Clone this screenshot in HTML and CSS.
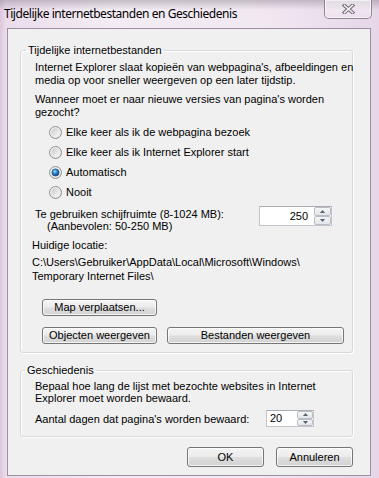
FILE: index.html
```html
<!DOCTYPE html>
<html lang="nl">
<head>
<meta charset="utf-8">
<title>Tijdelijke internetbestanden en Geschiedenis</title>
<link rel="stylesheet" href="styles.css">
</head>
<body>
<div class="window">
  <div class="titlebar">
    <span class="title">Tijdelijke internetbestanden en Geschiedenis</span>
    <button class="close" aria-label="Sluiten">
      <svg width="13" height="10" viewBox="0 0 13 10">
        <path d="M2.5 1.5 L10.5 8.5 M10.5 1.5 L2.5 8.5" stroke="#6f6a72" stroke-width="3.6" stroke-linecap="square" fill="none"/>
        <path d="M2.5 1.5 L10.5 8.5 M10.5 1.5 L2.5 8.5" stroke="#f4f2f5" stroke-width="1.6" stroke-linecap="square" fill="none"/>
      </svg>
    </button>
  </div>
  <div class="client">
    <fieldset class="group g1">
      <legend>Tijdelijke internetbestanden</legend>
      <p class="para">Internet Explorer slaat kopieën van webpagina's, afbeeldingen en<br>media op voor sneller weergeven op een later tijdstip.</p>
      <p class="para q">Wanneer moet er naar nieuwe versies van pagina's worden<br>gezocht?</p>
      <div class="radios">
        <label class="radio">
          <svg class="rb" width="13" height="13" viewBox="0 0 13 13">
            <defs>
              <linearGradient id="rIn" x1="0" y1="0" x2="1" y2="1">
                <stop offset="0" stop-color="#c9c9c9"/>
                <stop offset="1" stop-color="#fbfbfb"/>
              </linearGradient>
              <linearGradient id="rRing" x1="0" y1="0" x2="1" y2="1">
                <stop offset="0" stop-color="#f6f6f6"/>
                <stop offset="1" stop-color="#e2e2e2"/>
              </linearGradient>
              <radialGradient id="rDot" cx="0.4" cy="0.35" r="0.7">
                <stop offset="0" stop-color="#9bdcff"/>
                <stop offset="0.45" stop-color="#2b86cf"/>
                <stop offset="1" stop-color="#0b355f"/>
              </radialGradient>
            </defs>
            <circle cx="6.5" cy="6.5" r="6" fill="url(#rRing)" stroke="#8e8f8f"/>
            <circle cx="6.5" cy="6.5" r="4.2" fill="url(#rIn)"/>
          </svg>
          <span>Elke keer als ik de webpagina bezoek</span>
        </label>
        <label class="radio">
          <svg class="rb" width="13" height="13" viewBox="0 0 13 13">
            <circle cx="6.5" cy="6.5" r="6" fill="url(#rRing)" stroke="#8e8f8f"/>
            <circle cx="6.5" cy="6.5" r="4.2" fill="url(#rIn)"/>
          </svg>
          <span>Elke keer als ik Internet Explorer start</span>
        </label>
        <label class="radio">
          <svg class="rb" width="13" height="13" viewBox="0 0 13 13">
            <circle cx="6.5" cy="6.5" r="6" fill="url(#rRing)" stroke="#8e8f8f"/>
            <circle cx="6.5" cy="6.5" r="4.2" fill="url(#rIn)"/>
            <circle cx="6.5" cy="6.5" r="3.6" fill="url(#rDot)" stroke="#1a4a78" stroke-width="0.6"/>
          </svg>
          <span>Automatisch</span>
        </label>
        <label class="radio">
          <svg class="rb" width="13" height="13" viewBox="0 0 13 13">
            <circle cx="6.5" cy="6.5" r="6" fill="url(#rRing)" stroke="#8e8f8f"/>
            <circle cx="6.5" cy="6.5" r="4.2" fill="url(#rIn)"/>
          </svg>
          <span>Nooit</span>
        </label>
      </div>
      <div class="disk">
        <div class="disk-label">
          <div>Te gebruiken schijfruimte (8-1024 MB):</div>
          <div class="indent">(Aanbevolen: 50-250 MB)</div>
        </div>
        <div class="spin spin-disk">
          <span class="val">250</span>
          <span class="arrows">
            <span class="arr"><svg width="5" height="3" viewBox="0 0 5 3"><path d="M0 3 L2.5 0 L5 3 Z" fill="#56606b"/></svg></span>
            <span class="arr"><svg width="5" height="3" viewBox="0 0 5 3"><path d="M0 0 L2.5 3 L5 0 Z" fill="#56606b"/></svg></span>
          </span>
        </div>
      </div>
      <div class="loc">Huidige locatie:</div>
      <div class="path">C:\Users\Gebruiker\AppData\Local\Microsoft\Windows\<br>Temporary Internet Files\</div>
      <div class="btnrow first">
        <button class="btn w-map">Map verplaatsen...</button>
      </div>
      <div class="btnrow second">
        <button class="btn w-map">Objecten weergeven</button>
        <button class="btn w-best">Bestanden weergeven</button>
      </div>
    </fieldset>
    <fieldset class="group g2">
      <legend>Geschiedenis</legend>
      <p class="para hist">Bepaal hoe lang de lijst met bezochte websites in Internet<br>Explorer moet worden bewaard.</p>
      <div class="days">
        <span>Aantal dagen dat pagina's worden bewaard:</span>
        <div class="spin spin-days">
          <span class="val left">20</span>
          <span class="arrows">
            <span class="arr"><svg width="5" height="3" viewBox="0 0 5 3"><path d="M0 3 L2.5 0 L5 3 Z" fill="#56606b"/></svg></span>
            <span class="arr"><svg width="5" height="3" viewBox="0 0 5 3"><path d="M0 0 L2.5 3 L5 0 Z" fill="#56606b"/></svg></span>
          </span>
        </div>
      </div>
    </fieldset>
    <div class="dlg-buttons">
      <button class="btn w-ok">OK</button>
      <button class="btn w-ok">Annuleren</button>
    </div>
  </div>
</div>
</body>
</html>
```
FILE: styles.css
```css
html, body {
  margin: 0;
  padding: 0;
}
body {
  width: 379px;
  height: 478px;
  overflow: hidden;
  font-family: "Liberation Sans", Arial, sans-serif;
  font-size: 11px;
  color: #000;
}
.window {
  height: 478px;
  display: flex;
  flex-direction: column;
  background:
    linear-gradient(to bottom, rgba(110, 100, 112, 0.35) 0px, rgba(255, 255, 255, 0) 10px),
    linear-gradient(to right, #dcc6dd 0px, #ebdcec 6px, #f3ecf4 30%, #f1e8f2 70%, #e6d6e8 100%);
}
.titlebar {
  flex: none;
  height: 28px;
  display: flex;
  align-items: flex-start;
}
.title {
  font-family: "Noto Sans", "Open Sans", sans-serif;
  font-size: 12px;
  line-height: 16px;
  letter-spacing: -0.45px;
  padding: 6px 0 0 4px;
  white-space: nowrap;
  color: #000;
}
.close {
  margin-left: auto;
  margin-right: 7px;
  width: 48px;
  height: 19px;
  box-sizing: border-box;
  padding: 0;
  border: 1px solid #8f8593;
  border-top: none;
  border-radius: 0 0 5px 5px;
  background: linear-gradient(to bottom, rgba(255, 255, 255, 0.55), rgba(240, 232, 242, 0.35));
  box-shadow: inset 0 0 0 1px rgba(255, 255, 255, 0.55);
  display: flex;
  align-items: center;
  justify-content: center;
}
.client {
  flex: none;
  margin: 0 8px 0 7px;
  height: 448px;
  box-sizing: border-box;
  border: 1px solid #9c8f9f;
  background: #f0f0f0;
  display: flex;
  flex-direction: column;
}
.group {
  margin: 0 17px 0 12px;
  border: 1px solid #d5d9dd;
  border-radius: 3px;
  box-shadow: inset 1px 1px 0 #fff, 1px 1px 0 #fff;
  min-width: 0;
  white-space: nowrap;
}
.group legend {
  line-height: 13px;
  padding: 0 2px;
}
.g1 {
  margin-top: 15px;
  padding: 4px 4px 8px 14px;
}
.g1 legend {
  margin-left: -9px;
}
.g2 {
  margin-top: 11px;
  padding: 3px 4px 9px 14px;
}
.g2 legend {
  margin-left: -10px;
}
.para {
  margin: 0;
  line-height: 13px;
}
.para.q {
  margin-top: 6px;
}
.para.hist {
  line-height: 12px;
}
.radios {
  margin-top: 3px;
}
.radio {
  height: 20px;
  display: flex;
  align-items: center;
  gap: 4px;
  padding-left: 14px;
  line-height: 13px;
}
.rb {
  display: block;
  flex: none;
}
.disk {
  display: flex;
  margin-top: 6px;
  line-height: 12px;
}
.disk .indent {
  padding-left: 12px;
}
.spin {
  display: flex;
  box-sizing: border-box;
  border: 1px solid #c2c5cb;
  border-top-color: #abadb3;
  background: #fff;
}
.spin .val {
  flex: 1;
  text-align: right;
  padding-right: 6px;
  align-self: center;
  line-height: 13px;
}
.spin .val.left {
  text-align: left;
  padding-left: 3px;
}
.spin .arrows {
  flex: none;
  width: 17px;
  display: flex;
  flex-direction: column;
}
.arr {
  flex: 1;
  display: flex;
  align-items: center;
  justify-content: center;
  box-sizing: border-box;
  border: 1px solid #b9bec6;
  border-radius: 2px;
  background: linear-gradient(to bottom, #f6f6f6, #e3e5e8);
}
.arr svg {
  display: block;
}
.spin-disk {
  margin-left: auto;
  margin-right: 16px;
  margin-top: -2px;
  width: 73px;
  height: 20px;
}
.loc {
  margin: 7px 0 0 -3px;
  line-height: 13px;
}
.path {
  margin: 3px 0 0 -3px;
  line-height: 14px;
}
.btnrow {
  display: flex;
  gap: 10px;
  padding-left: 7px;
}
.btnrow.first {
  margin-top: 16px;
}
.btnrow.second {
  margin-top: 11px;
}
.btn {
  box-sizing: border-box;
  height: 17px;
  padding: 0;
  font-family: "Liberation Sans", Arial, sans-serif;
  font-size: 11px;
  line-height: 13px;
  color: #000;
  border: 1px solid #767676;
  border-radius: 3px;
  background: linear-gradient(to bottom, #f4f4f4 0%, #ececec 48%, #dedede 52%, #d2d2d2 100%);
  box-shadow: inset 0 0 0 1px rgba(255, 255, 255, 0.75);
  white-space: nowrap;
}
.w-map {
  width: 115px;
}
.w-best {
  width: 177px;
}
.days {
  display: flex;
  align-items: center;
  margin-top: 6px;
  height: 17px;
  line-height: 12px;
}
.spin-days {
  margin-left: auto;
  margin-right: 34px;
  width: 48px;
  height: 17px;
}
.spin-days .arrows {
  width: 16px;
}
.dlg-buttons {
  display: flex;
  justify-content: flex-end;
  gap: 12px;
  margin: 10px 17px 0 0;
}
.w-ok {
  width: 77px;
  height: 20px;
}
```
